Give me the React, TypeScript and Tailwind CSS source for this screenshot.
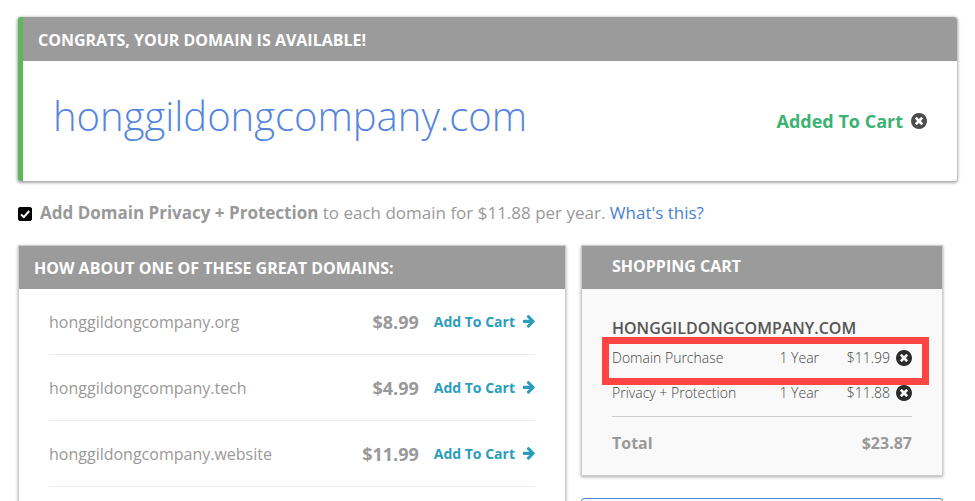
import type { ReactNode } from "react"
import clsx from "clsx"

const suggestions = [
  { name: "honggildongcompany.org", price: "$8.99" },
  { name: "honggildongcompany.tech", price: "$4.99" },
  { name: "honggildongcompany.website", price: "$11.99" },
]

const cartItems = [
  { label: "Domain Purchase", term: "1 Year", price: "$11.99", highlighted: true },
  { label: "Privacy + Protection", term: "1 Year", price: "$11.88", highlighted: false },
]

function RemoveIcon({ className }: { className?: string }) {
  return (
    <svg viewBox="0 128 1536 1536" fill="currentColor" className={className} aria-hidden="true">
      <path d="M1149 1122q0-26-19-45l-181-181 181-181q19-19 19-45 0-27-19-46l-90-90q-19-18-46-18-26 0-45 18l-181 181-181-181q-19-18-45-18-27 0-46 18l-90 90q-19 19-19 46 0 26 19 45l181 181-181 181q-19 19-19 45 0 27 19 46l90 90q19 18 46 18 26 0 45-18l181-181 181 181q19 18 45 18 27 0 46-18l90-90q19-19 19-46zm387-226q0 209-103 385.5t-279.5 279.5-385.5 103-385.5-103-279.5-279.5-103-385.5 103-385.5 279.5-279.5 385.5-103 385.5 103 279.5 279.5 103 385.5z" />
    </svg>
  )
}

function ArrowIcon() {
  return (
    <svg viewBox="150 200 1472 1552" fill="currentColor" className="h-[13px] w-3" aria-hidden="true">
      <path d="M1600 960q0 54-37 91l-651 651q-39 37-91 37-51 0-90-37l-75-75q-38-38-38-91t38-91l293-293h-704q-52 0-84.5-37.5t-32.5-90.5v-128q0-53 32.5-90.5t84.5-37.5h704l-293-294q-38-36-38-90t38-90l75-75q38-38 90-38 53 0 91 38l651 651q37 35 37 90z" />
    </svg>
  )
}

function CardHeader({ children, className }: { children: ReactNode; className?: string }) {
  return <h2 className={clsx("bg-[#9b9b9b] text-base leading-6 font-bold text-white", className)}>{children}</h2>
}

export default function App() {
  return (
    <main className="h-screen overflow-hidden bg-white px-[18px] pt-[17px] font-['Open_Sans',sans-serif] text-[#999]">
      {/* Search result */}
      <section className="rounded-[3px] border-l-5 border-[#5cb85c] bg-white shadow-[0_1px_3px_1px_rgba(0,0,0,0.35)]">
        <CardHeader className="rounded-tr-[3px] px-[15px] pt-[11px] pb-[9px]">CONGRATS, YOUR DOMAIN IS AVAILABLE!</CardHeader>
        <div className="flex h-[120px] items-center justify-between px-[30px]">
          <h1 className="pb-[10px] text-[40px] leading-[54px] font-light text-[#5586dc]">honggildongcompany.com</h1>
          <div className="flex items-center gap-2 text-lg font-bold text-[#3cb371]">
            Added To Cart
            <button type="button" aria-label="Remove" className="text-[#4d4d4d]">
              <RemoveIcon className="size-4" />
            </button>
          </div>
        </div>
      </section>

      {/* Privacy option */}
      <div className="mt-5 flex items-center gap-2 text-[17px] leading-6">
        <div className="relative mt-0.5 size-3.5">
          <input id="privacy" type="checkbox" defaultChecked className="peer block size-3.5 appearance-none rounded-[2px] border border-black checked:bg-black" />
          <svg viewBox="0 0 14 14" className="pointer-events-none absolute inset-0 hidden peer-checked:block" aria-hidden="true">
            <path d="M3 7.5l2.8 2.6L11.2 4" fill="none" stroke="white" strokeWidth="2" />
          </svg>
        </div>
        <p>
          <label htmlFor="privacy">
            <strong className="font-bold">Add Domain Privacy + Protection</strong> to each domain for $11.88 per year.
          </label>{" "}
          <a href="#" className="text-[#4a7fd4]">
            What's this?
          </a>
        </p>
      </div>

      <div className="mt-5 flex gap-[15px] pr-[14px]">
        {/* Suggested domains */}
        <section className="flex-1 self-start border border-[#ccc] bg-white pb-12 shadow-[0_1px_3px_rgba(0,0,0,0.35)]">
          <CardHeader className="px-[15px] pt-[10px] pb-[9px]">HOW ABOUT ONE OF THESE GREAT DOMAINS:</CardHeader>
          <ul className="px-[30px]">
            {suggestions.map((domain) => (
              <li key={domain.name} className="flex h-[66px] items-center border-b border-[#eaeaea]">
                <span className="flex-1 text-base">{domain.name}</span>
                <span className="text-lg font-bold">{domain.price}</span>
                <button type="button" className="ml-[15px] flex items-center gap-2 text-sm font-bold text-[#2a9dbc]">
                  Add To Cart
                  <ArrowIcon />
                </button>
              </li>
            ))}
          </ul>
        </section>

        {/* Cart */}
        <aside className="w-[362px]">
          <section className="border border-[#ccc] bg-[#f9f9f9] shadow-[0_1px_3px_rgba(0,0,0,0.35)]">
            <CardHeader className="px-[30px] pt-2 pb-[11px]">SHOPPING CART</CardHeader>
            <div className="px-[30px] pt-[27px] pb-5">
              <h3 className="text-base leading-6 font-semibold text-[#555]">HONGGILDONGCOMPANY.COM</h3>
              <ul className="border-b border-[#ccc] pb-1.5 text-sm font-light text-[#444]">
                {cartItems.map((item) => (
                  <li key={item.label} className="relative flex h-[35px] items-center">
                    {item.highlighted && (
                      <span className="absolute -top-[3px] -right-[17px] -bottom-[10px] -left-[10px] border-7 border-[#ff4444]" />
                    )}
                    <span className="flex-1">{item.label}</span>
                    <span>{item.term}</span>
                    <span className="w-[71px] text-right">{item.price}</span>
                    <button type="button" aria-label={`Remove ${item.label}`} className="ml-1.5 text-[#2b2b2b]">
                      <RemoveIcon className="size-4" />
                    </button>
                  </li>
                ))}
              </ul>
              <p className="flex justify-between pt-[14px] text-base font-bold">
                <span>Total</span>
                <span>$23.87</span>
              </p>
            </div>
          </section>
          <div className="mt-[22px] h-12 rounded-[3px] border border-[#4a86d4] bg-white" />
        </aside>
      </div>
    </main>
  )
}
